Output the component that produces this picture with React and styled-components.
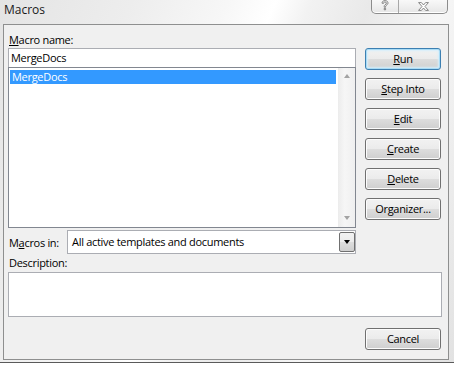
import React from "react"
import styled, { createGlobalStyle } from "styled-components"

const GlobalStyle = createGlobalStyle`
  html, body {
    margin: 0;
    padding: 0;
    background: #ffffff;
  }
  body {
    font-family: "Open Sans", "Noto Sans", sans-serif;
    font-size: 11px;
    letter-spacing: -0.3px;
    color: #000;
  }
`

const Window = styled.div`
  width: 454px;
  height: 363px;
  box-sizing: border-box;
  border-bottom: 1px solid #5a5a5a;
  display: flex;
  flex-direction: column;
  background: linear-gradient(
    112deg,
    #e4e4e4 0%,
    #ededed 22%,
    #f7f7f7 38%,
    #ffffff 46%,
    #f2f2f2 52%,
    #e9e9e9 62%,
    #f6f6f6 74%,
    #e2e2e2 100%
  );
  overflow: hidden;
`

const TitleBar = styled.div`
  height: 24px;
  display: flex;
  justify-content: space-between;
  align-items: flex-start;
  padding: 0 6px 0 4px;
`

const Title = styled.div`
  font-size: 12px;
  letter-spacing: 0;
  line-height: 16px;
  padding-top: 2px;
  color: #1a1a1a;
`

const CaptionGroup = styled.div`
  display: flex;
  height: 14px;
  margin-top: -1px;
  border: 1px solid #8c8c8c;
  border-top: none;
  border-radius: 0 0 5px 5px;
  background: linear-gradient(#fafafa, #e6e6e6);
  box-shadow: inset 0 -1px 0 #ffffff;
  overflow: hidden;
`

const CaptionButton = styled.div`
  width: ${({ $w }) => $w}px;
  display: flex;
  align-items: center;
  justify-content: center;
  & + & {
    border-left: 1px solid #a8a8a8;
  }
`

const Client = styled.div`
  margin: 0 5px 0 3px;
  height: 336px;
  box-sizing: border-box;
  border: 1px solid #8e8f8f;
  background: #f0f0f0;
  display: flex;
  flex-direction: column;
  padding: 0 6px 0 4px;
`

const Upper = styled.div`
  display: flex;
  gap: 9px;
`

const LeftCol = styled.div`
  width: 348px;
  display: flex;
  flex-direction: column;
`

const RightCol = styled.div`
  width: 76px;
  padding-top: 23px;
  display: flex;
  flex-direction: column;
  gap: 8px;
`

const Label = styled.div`
  height: ${({ $h }) => $h || 17}px;
  line-height: ${({ $h }) => $h || 17}px;
  padding-top: ${({ $top }) => $top || 0}px;
  padding-left: 1px;
  white-space: nowrap;
`

const NameInput = styled.div`
  height: 19px;
  box-sizing: border-box;
  border: 1px solid #abadb3;
  border-bottom: none;
  background: #fff;
  padding-left: 2px;
  line-height: 18px;
`

const ListBox = styled.div`
  height: 161px;
  box-sizing: border-box;
  border: 1px solid #828790;
  background: #fff;
  display: flex;
`

const ListItems = styled.div`
  flex: 1;
  padding: 2px 2px 0 1px;
`

const ListItem = styled.div`
  height: 14px;
  line-height: 14px;
  padding-left: 2px;
  background: ${({ $selected }) => ($selected ? "#3399ff" : "transparent")};
  color: ${({ $selected }) => ($selected ? "#fff" : "#000")};
`

const ScrollTrack = styled.div`
  width: 17px;
  background: linear-gradient(90deg, #ececec, #f6f6f6 40%, #efefef);
  display: flex;
  flex-direction: column;
  justify-content: space-between;
  align-items: center;
  padding: 6px 0 7px;
`

const Arrow = styled.div`
  width: 0;
  height: 0;
  border-left: 3.5px solid transparent;
  border-right: 3.5px solid transparent;
  ${({ $down, $color }) =>
    $down
      ? `border-top: 4px solid ${$color};`
      : `border-bottom: 4px solid ${$color};`}
`

const ComboRow = styled.div`
  display: flex;
  align-items: center;
  margin-top: 2px;
  height: 24px;
`

const ComboLabel = styled.div`
  width: 58px;
  padding-left: 1px;
  padding-top: 1px;
`

const Combo = styled.div`
  flex: 1;
  height: 24px;
  box-sizing: border-box;
  border: 1px solid #abadb3;
  background: #fff;
  display: flex;
  align-items: stretch;
`

const ComboText = styled.div`
  flex: 1;
  padding-left: 4px;
  line-height: 21px;
`

const ComboButton = styled.div`
  width: 16px;
  margin: 1px 0 1px;
  box-sizing: border-box;
  border: 1px solid #707070;
  border-radius: 2px;
  background: linear-gradient(#f2f2f2 0%, #ebebeb 50%, #dddddd 51%, #cfcfcf 100%);
  display: flex;
  align-items: center;
  justify-content: center;
`

const DescBox = styled.div`
  height: 45px;
  box-sizing: border-box;
  border: 1px solid #abadb3;
  background: #fff;
`

const Footer = styled.div`
  display: flex;
  justify-content: flex-end;
  padding: 11px 1px 0 0;
`

const Button = styled.div`
  width: 76px;
  height: 22px;
  box-sizing: border-box;
  border: 1px solid ${({ $default }) => ($default ? "#3c7fb1" : "#707070")};
  border-radius: 3px;
  background: linear-gradient(#f2f2f2 0%, #ebebeb 50%, #dddddd 51%, #cfcfcf 100%);
  box-shadow: ${({ $default }) =>
    $default
      ? "inset 0 0 0 1px #a9dcf6, inset 0 0 2px 2px #d6eefb"
      : "inset 0 0 0 1px #fcfcfc"};
  display: flex;
  align-items: center;
  justify-content: center;
  line-height: 18px;
  white-space: nowrap;
`

const HelpIcon = () => (
  <svg width="8" height="12" viewBox="0 0 8 12">
    <path
      d="M1 3.2 C1 1.4 2.4 0.6 4 0.6 C5.8 0.6 7 1.6 7 3 C7 4.4 5.8 4.9 5 5.5 C4.5 5.9 4.6 6.5 4.6 7.2 L3.2 7.2 C3.2 6.2 3.2 5.4 4 4.8 C4.8 4.2 5.5 3.9 5.5 3.1 C5.5 2.4 4.9 2 4 2 C3 2 2.5 2.5 2.5 3.4 Z M3.2 8.4 L4.6 8.4 L4.6 9.8 L3.2 9.8 Z"
      fill="#ffffff"
      stroke="#6a6a6a"
      strokeWidth="0.8"
    />
  </svg>
)

const CloseIcon = () => (
  <svg width="11" height="9" viewBox="0 0 11 9">
    <path
      d="M0.6 0.6 L3.4 0.6 L5.5 3 L7.6 0.6 L10.4 0.6 L7 4.5 L10.4 8.4 L7.6 8.4 L5.5 6 L3.4 8.4 L0.6 8.4 L4 4.5 Z"
      fill="#ffffff"
      stroke="#6a6a6a"
      strokeWidth="0.8"
      strokeLinejoin="round"
    />
  </svg>
)

const buttons = [
  { key: "R", rest: "un", default: true },
  { key: "S", rest: "tep Into" },
  { key: "E", rest: "dit" },
  { key: "C", rest: "reate" },
  { key: "D", rest: "elete" },
  { pre: "Or", key: "g", rest: "anizer..." },
]

const App = () => {
  return (
    <>
      <GlobalStyle />
      <Window>
        <TitleBar>
          <Title>Macros</Title>
          <CaptionGroup>
            <CaptionButton $w={26}>
              <HelpIcon />
            </CaptionButton>
            <CaptionButton $w={48}>
              <CloseIcon />
            </CaptionButton>
          </CaptionGroup>
        </TitleBar>
        <Client>
          <Upper>
            <LeftCol>
              <Label $top={6}>
                <u>M</u>acro name:
              </Label>
              <NameInput>MergeDocs</NameInput>
              <ListBox>
                <ListItems>
                  <ListItem $selected>MergeDocs</ListItem>
                </ListItems>
                <ScrollTrack>
                  <Arrow $color="#a3a3a3" />
                  <Arrow $down $color="#a3a3a3" />
                </ScrollTrack>
              </ListBox>
              <ComboRow>
                <ComboLabel>
                  M<u>a</u>cros in:
                </ComboLabel>
                <Combo>
                  <ComboText>All active templates and documents</ComboText>
                  <ComboButton>
                    <Arrow $down $color="#000" />
                  </ComboButton>
                </Combo>
              </ComboRow>
            </LeftCol>
            <RightCol>
              {buttons.map((b) => (
                <Button key={b.key} $default={b.default}>
                  {b.pre}
                  <u>{b.key}</u>
                  {b.rest}
                </Button>
              ))}
            </RightCol>
          </Upper>
          <Label $h={18}>Description:</Label>
          <DescBox />
          <Footer>
            <Button>Cancel</Button>
          </Footer>
        </Client>
      </Window>
    </>
  )
}

export default App
